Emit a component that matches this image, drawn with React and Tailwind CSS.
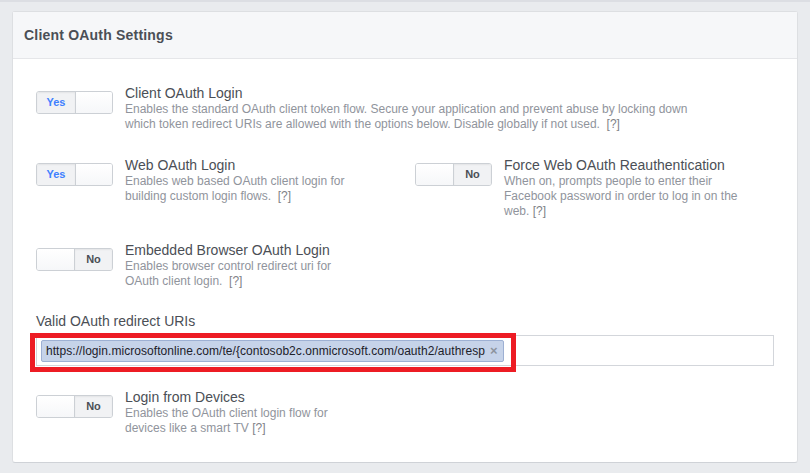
import React from "react";

const font = { fontFamily: '"Liberation Sans", Arial, sans-serif' };

const Toggle = ({ on }) => (
  <div className="flex h-[23px] w-[77px] shrink-0 overflow-hidden rounded-[3px] border border-[#ccd0d5] text-[11px] font-bold">
    {on ? (
      <>
        <div className="flex w-[39px] items-center justify-center border-r border-[#ccd0d5] bg-[#f1f2f4] text-[#4080ff] shadow-[inset_0_1px_2px_rgba(0,0,0,0.06)]">Yes</div>
        <div className="flex-1 bg-gradient-to-b from-white to-[#f6f7f9]" />
      </>
    ) : (
      <>
        <div className="w-[38px] border-r border-[#ccd0d5] bg-gradient-to-b from-white to-[#f6f7f9]" />
        <div className="flex flex-1 items-center justify-center bg-[#f1f2f4] text-[#4b4f56] shadow-[inset_0_1px_2px_rgba(0,0,0,0.06)]">No</div>
      </>
    )}
  </div>
);

const Setting = ({ on, title, desc, wide, tight }) => (
  <div className="flex gap-[12px]">
    <div className="mt-[7px]">
      <Toggle on={on} />
    </div>
    <div className={wide ? "max-w-[595px]" : "max-w-[238px]"}>
      <div className="text-[14px] leading-[18px] text-[#4b4f56]">{title}</div>
      <p className="text-[12px] leading-[15px] text-[#90949c]">
        {desc}
        {tight ? " " : "\u00a0 "}
        <span className="text-[#7f8287]">[?]</span>
      </p>
    </div>
  </div>
);

export default function App() {
  return (
    <div className="min-h-[473px] w-[810px] bg-[#e9ebee]" style={font}>
      <div className="h-[2px] bg-[#dcdee3]" />
      <div className="ml-[12px] mt-[9px] w-[786px] rounded-[3px] border border-[#dddfe2] border-b-[#cfd2d7] bg-white">
        <div className="flex h-[47px] items-center border-b border-[#e5e6e9] bg-[#f6f7f9] px-[11px] text-[14px] font-bold tracking-[0.2px] text-[#4b4f56]">
          Client OAuth Settings
        </div>

        <div className="px-[23px] pb-[26px] pt-[25px]">
          <Setting
            on
            wide
            title="Client OAuth Login"
            desc="Enables the standard OAuth client token flow. Secure your application and prevent abuse by locking down which token redirect URIs are allowed with the options below. Disable globally if not used."
          />

          <div className="mt-[24px] grid grid-cols-[379px_1fr]">
            <Setting
              on
              title="Web OAuth Login"
              desc="Enables web based OAuth client login for building custom login flows."
            />
            <Setting
              tight
              title="Force Web OAuth Reauthentication"
              desc="When on, prompts people to enter their Facebook password in order to log in on the web."
            />
          </div>

          <div className="mt-[22px]">
            <Setting
              title="Embedded Browser OAuth Login"
              desc="Enables browser control redirect uri for OAuth client login."
            />
          </div>

          <div className="mt-[23px] text-[14px] leading-[18px] text-[#4b4f56]">Valid OAuth redirect URIs</div>
          <div className="relative mt-[5px]">
            <div className="flex h-[31px] items-center border border-[#d3d6db] bg-white px-[4px]">
              <div className="flex h-[22px] items-center gap-[5px] rounded-[2px] border border-[#9db0d3] bg-[#c6d3e9] pl-[4px] pr-[5px] text-[12px] tracking-[0.05px] text-[#1d2129]">
                <span>https://login.microsoftonline.com/te/{"{"}contosob2c.onmicrosoft.com/oauth2/authresp</span>
                <span className="text-[13px] font-bold leading-none text-[#8d949e]">×</span>
              </div>
            </div>
            <div className="absolute left-[-6px] top-[-2px] h-[39px] w-[486px] border-[5px] border-[#ed1c24]" />
          </div>

          <div className="mt-[22px]">
            <Setting
              tight
              title="Login from Devices"
              desc="Enables the OAuth client login flow for devices like a smart TV"
            />
          </div>
        </div>
      </div>
    </div>
  );
}
